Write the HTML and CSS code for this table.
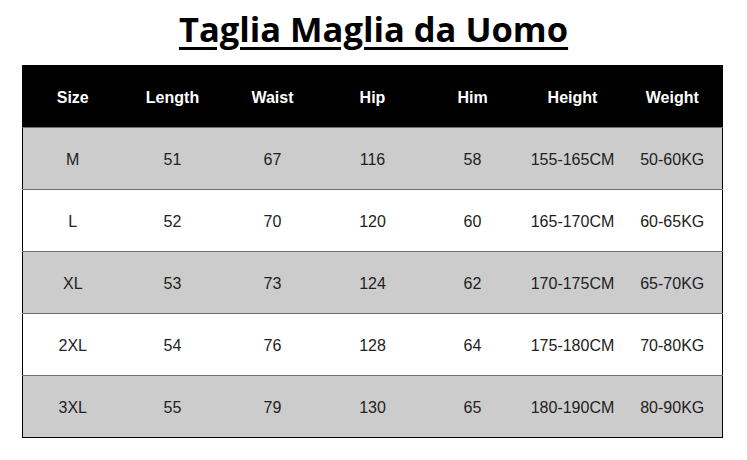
FILE: index.html
```html
<!DOCTYPE html>
<html lang="it">
<head>
<meta charset="utf-8">
<title>Taglia Maglia da Uomo</title>
<link rel="stylesheet" href="styles.css">
</head>
<body>
<div class="page">
  <h1 class="title">Taglia Maglia da Uomo</h1>
  <table class="size-table">
    <thead>
      <tr><th>Size</th><th>Length</th><th>Waist</th><th>Hip</th><th>Him</th><th>Height</th><th>Weight</th></tr>
    </thead>
    <tbody>
      <tr class="alt"><td>M</td><td>51</td><td>67</td><td>116</td><td>58</td><td>155-165CM</td><td>50-60KG</td></tr>
      <tr><td>L</td><td>52</td><td>70</td><td>120</td><td>60</td><td>165-170CM</td><td>60-65KG</td></tr>
      <tr class="alt"><td>XL</td><td>53</td><td>73</td><td>124</td><td>62</td><td>170-175CM</td><td>65-70KG</td></tr>
      <tr><td>2XL</td><td>54</td><td>76</td><td>128</td><td>64</td><td>175-180CM</td><td>70-80KG</td></tr>
      <tr class="alt"><td>3XL</td><td>55</td><td>79</td><td>130</td><td>65</td><td>180-190CM</td><td>80-90KG</td></tr>
    </tbody>
  </table>
</div>
</body>
</html>
```

FILE: styles.css
```css
html, body {
  margin: 0;
  padding: 0;
  background: #ffffff;
}

.page {
  width: 747px;
  height: 460px;
  display: flex;
  flex-direction: column;
  align-items: center;
}

.title {
  margin: 6px 0 0 0;
  height: 59px;
  font-family: "Open Sans", "Noto Sans", sans-serif;
  font-weight: 700;
  font-size: 34.5px;
  line-height: 46px;
  color: #000;
  text-decoration: underline;
  text-decoration-thickness: 3px;
  text-underline-offset: 5px;
}

.size-table {
  margin-right: 2px;
  width: 701px;
  border-collapse: collapse;
  table-layout: fixed;
  border: 1px solid #000;
  font-family: "Liberation Sans", Arial, sans-serif;
  font-size: 16px;
}

.size-table th,
.size-table td {
  height: 62px;
  padding: 3px 0 0 0;
  box-sizing: border-box;
  text-align: center;
  vertical-align: middle;
}

.size-table th {
  background: #000;
  color: #fff;
  font-weight: 700;
}

.size-table td {
  color: #222;
  border-top: 1px solid #707070;
}

.size-table tr.alt td {
  background: #cccccc;
}
```
